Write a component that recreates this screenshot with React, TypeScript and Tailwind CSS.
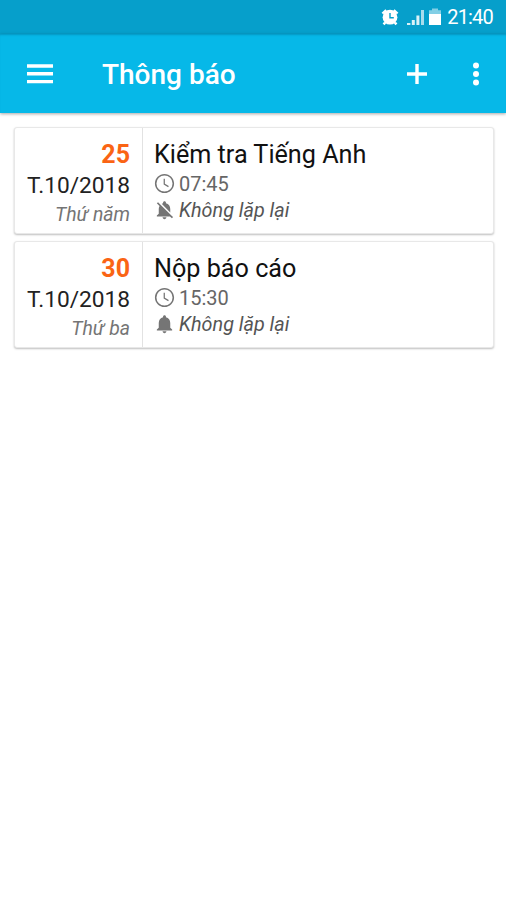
import React from "react";

type Reminder = {
  day: string;
  month: string;
  weekday: string;
  title: string;
  time: string;
  repeat: string;
  muted: boolean;
};

const reminders: Reminder[] = [
  {
    day: "25",
    month: "T.10/2018",
    weekday: "Thứ năm",
    title: "Kiểm tra Tiếng Anh",
    time: "07:45",
    repeat: "Không lặp lại",
    muted: true,
  },
  {
    day: "30",
    month: "T.10/2018",
    weekday: "Thứ ba",
    title: "Nộp báo cáo",
    time: "15:30",
    repeat: "Không lặp lại",
    muted: false,
  },
];

function StatusBar() {
  return (
    <Box className="flex h-[34px] items-center justify-end bg-[#069fcb] pr-[13px] text-white">
      <svg className="mr-[8px] h-[18px] w-[18px]" viewBox="0 0 18 18" fill="currentColor">
        <path d="M.6 4.8 4.4 1.2 6 2.9 2.2 6.3zM17.4 4.8 13.6 1.2 12 2.9l3.8 3.4z" />
        <path d="m3.2 13.8 1.9 1.6-1.6 1.8-1.9-1.6zM14.8 13.8l-1.9 1.6 1.6 1.8 1.9-1.6z" />
        <circle cx="9" cy="9.2" r="7.4" />
        <path d="M9 5v4.8h3.8" fill="none" stroke="#069fcb" strokeWidth="1.4" />
      </svg>
      <svg className="mr-[4px] h-[18px] w-[18px]" viewBox="0 0 18 18" fill="currentColor">
        <path d="M0 15h3.4v2H0zM4.8 12h3v5h-3zM9.4 7.5h3V17h-3z" fillOpacity=".85" />
        <path d="M14 2h3v15h-3z" fillOpacity=".65" />
      </svg>
      <svg className="mr-[6px] h-[18px] w-[12px]" viewBox="0 0 12 18">
        <path d="M3 .5h6v1.8h3V6H0V2.3h3z" fill="#fff" fillOpacity=".5" />
        <path d="M0 6h12v11H0z" fill="#fff" />
      </svg>
      <span className="pt-px text-[20px] leading-[33px] tracking-[-0.8px]">21:40</span>
    </Box>
  );
}

function Box({ className, children }: { className?: string; children?: React.ReactNode }) {
  return <div className={className}>{children}</div>;
}

function Toolbar() {
  return (
    <header className="flex h-[79px] items-center bg-[#06b8e8] pl-[27px] text-white shadow-[0_1px_3px_rgba(0,0,0,0.35),inset_0_2px_2px_-1px_rgba(0,90,120,0.35)]">
      <svg className="h-[20px] w-[26px]" viewBox="0 0 26 20" fill="currentColor">
        <path d="M0 .3h26v3.4H0zM0 8.1h26v3.4H0zM0 15.9h26v3.4H0z" />
      </svg>
      <h1 className="ml-[49px] flex-1 pt-[2px] text-[28px] leading-[40px] font-medium">Thông báo</h1>
      <svg className="h-[20px] w-[20px]" viewBox="0 0 20 20" fill="currentColor">
        <path d="M8.3 0h3.4v8.3H20v3.4h-8.3V20H8.3v-8.3H0V8.3h8.3z" />
      </svg>
      <svg className="mr-[27px] ml-[46px] h-[24px] w-[6px]" viewBox="0 0 6 24" fill="currentColor">
        <circle cx="3" cy="3.4" r="3" />
        <circle cx="3" cy="12" r="3" />
        <circle cx="3" cy="20.6" r="3" />
      </svg>
    </header>
  );
}

function ClockIcon() {
  return (
    <svg className="-ml-[1px] h-[23px] w-[23px]" viewBox="0 0 24 24" fill="#757575">
      <path d="M11.99 2C6.47 2 2 6.48 2 12s4.47 10 9.99 10C17.52 22 22 17.52 22 12S17.52 2 11.99 2zM12 20.4a8.4 8.4 0 1 1 0-16.8 8.4 8.4 0 0 1 0 16.8z" />
      <path d="M12.4 7h-1.3v6l4.7 2.8.7-1.1-4.1-2.4z" />
    </svg>
  );
}

function BellIcon({ muted }: { muted: boolean }) {
  return (
    <svg className="-mt-[2px] -ml-[1px] h-[22px] w-[23px]" viewBox="0 0 24 24" preserveAspectRatio="none" fill="#757575">
      {muted ? (
        <path d="M20 18.69L7.84 6.14 5.27 3.49 4 4.76l2.8 2.8v.01c-.52.99-.8 2.16-.8 3.42v5l-2 2v1h13.73l2 2L21 19.72l-1-1.03zM12 22c1.11 0 2-.89 2-2h-4c0 1.11.89 2 2 2zm6-7.32V11c0-3.08-1.64-5.64-4.5-6.32V4c0-.83-.67-1.5-1.5-1.5s-1.5.67-1.5 1.5v.68c-.15.03-.29.08-.42.12-.1.03-.2.07-.3.11h-.01c-.01 0-.01 0-.02.01-.23.09-.46.2-.68.31 0 0-.01 0-.01.01L18 14.68z" />
      ) : (
        <path d="M12 22c1.1 0 2-.9 2-2h-4c0 1.1.89 2 2 2zm6-6v-5c0-3.07-1.64-5.64-4.5-6.32V4c0-.83-.67-1.5-1.5-1.5s-1.5.67-1.5 1.5v.68C7.63 5.36 6 7.92 6 11v5l-2 2v1h16v-1l-2-2z" />
      )}
    </svg>
  );
}

function ReminderCard({ item }: { item: Reminder }) {
  return (
    <li className="flex h-[107px] rounded-[3px] border border-[#e8e8e8] bg-white shadow-[0_1px_2px_rgba(0,0,0,0.25)]">
      <Box className="w-[128px] border-r border-[#e2e2e2] pt-[10px] pr-[12px] text-right">
        <p className="text-[25px] leading-[33px] font-bold text-[#fa6414]">{item.day}</p>
        <p className="text-[22.7px] leading-[30px] text-[#222]">{item.month}</p>
        <p className="text-[19.4px] leading-[27px] text-[#757575] italic">{item.weekday}</p>
      </Box>
      <Box className="flex-1 pt-[10px] pl-[11px]">
        <h2 className="h-[32px] pt-px text-[25.2px] leading-[32px] text-[#111]">{item.title}</h2>
        <Box className="flex h-[27px] items-center">
          <ClockIcon />
          <span className="ml-[3px] pt-px text-[20px] leading-[27px] text-[#666]">{item.time}</span>
        </Box>
        <Box className="flex h-[27px] items-center">
          <BellIcon muted={item.muted} />
          <span className="ml-[3px] text-[19.8px] leading-[27px] text-[#555] italic">{item.repeat}</span>
        </Box>
      </Box>
    </li>
  );
}

export default function App() {
  return (
    <main className="h-[900px] w-[506px] overflow-hidden bg-white font-['Roboto',sans-serif]">
      <StatusBar />
      <Toolbar />
      <ul className="flex flex-col gap-[7px] pt-[14px] pr-[12px] pl-[14px]">
        {reminders.map((item) => (
          <ReminderCard key={item.day} item={item} />
        ))}
      </ul>
    </main>
  );
}
